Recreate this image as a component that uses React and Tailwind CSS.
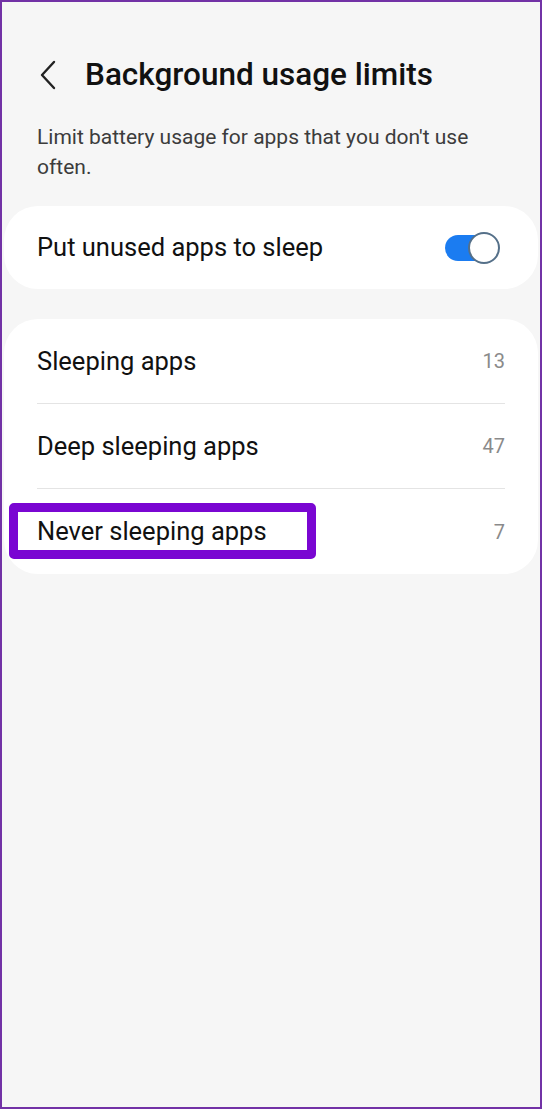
import React from 'react';

const rows = [
  { label: 'Sleeping apps', count: 13 },
  { label: 'Deep sleeping apps', count: 47 },
  { label: 'Never sleeping apps', count: 7, marked: true },
];

const Toggle = () => (
  <div className="relative w-[55px] h-[32px]">
    <div className="absolute left-0 top-[3px] w-[44px] h-[26px] rounded-full bg-[#1b7cf1]" />
    <div className="absolute right-0 top-0 w-[32px] h-[32px] rounded-full bg-white border-2 border-[#557089]" />
  </div>
);

export default function App() {
  return (
    <div
      className="w-[542px] h-[1109px] border-2 border-[#7232a6] bg-[#f6f6f6] text-[#111]"
      style={{ fontFamily: 'Roboto, "Noto Sans", sans-serif' }}
    >
      <div className="flex items-center h-[40px] mt-[53px] pl-[36px]">
        <svg width="20" height="30" viewBox="0 0 20 30" fill="none">
          <path d="M16 2 L4 15 L16 28" stroke="#222" strokeWidth="2.4" strokeLinecap="round" strokeLinejoin="round" />
        </svg>
        <h1 className="ml-[27px] text-[31.5px] font-medium">Background usage limits</h1>
      </div>

      <p className="mt-[27px] pl-[35px] pr-[30px] text-[21px] leading-[30px] text-[#3c3c3c]">
        Limit battery usage for apps that you don't use often.
      </p>

      <div className="mt-[24px] mx-[2px] h-[83px] rounded-[34px] bg-white flex items-center justify-between pl-[33px] pr-[38px]">
        <span className="text-[25.5px]">Put unused apps to sleep</span>
        <Toggle />
      </div>

      <div className="mt-[30px] mx-[2px] rounded-[34px] bg-white pl-[33px] pr-[33px]">
        {rows.map((row, i) => (
          <div
            key={row.label}
            className={`relative flex items-center justify-between h-[85px] ${i < rows.length - 1 ? 'border-b border-[#e4e4e4]' : ''}`}
          >
            <span className="text-[25.5px]">{row.label}</span>
            <span className="text-[20px] text-[#8a8a8a]">{row.count}</span>
            {row.marked && (
              <div className="absolute left-[-28px] top-[14px] w-[307px] h-[56px] border-[9px] border-[#7a06d2] rounded-[5px]" />
            )}
          </div>
        ))}
      </div>
    </div>
  );
}
